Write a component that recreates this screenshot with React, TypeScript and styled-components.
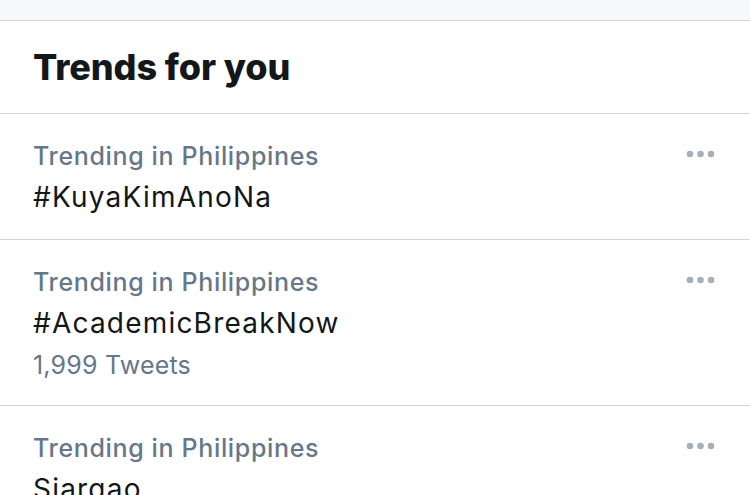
import styled, {createGlobalStyle} from "styled-components";

const GlobalStyle = createGlobalStyle`
  body {
    margin: 0;
    background: #ffffff;
    font-family: Inter, "Noto Sans", sans-serif;
    -webkit-font-smoothing: antialiased;
  }
`;

interface Trend {
    id: string;
    place: string;
    name: string;
    tweets?: string;
}

const trends: Array<Trend> = [
    {id: "1", place: "Trending in Philippines", name: "#KuyaKimAnoNa"},
    {id: "2", place: "Trending in Philippines", name: "#AcademicBreakNow", tweets: "1,999 Tweets"},
    {id: "3", place: "Trending in Philippines", name: "Siargao"},
];

export default function App() {
    return (
        <>
            <GlobalStyle/>
            <Page>
                <TopBand/>
                <Header>
                    <h2>Trends for you</h2>
                </Header>
                {trends.map(trend => (
                    <TrendRow key={trend.id}>
                        <TrendText>
                            <Place>{trend.place}</Place>
                            <Name>{trend.name}</Name>
                            {trend.tweets && <Count>{trend.tweets}</Count>}
                        </TrendText>
                        <MoreButton type="button" aria-label="More">
                            <svg width="29" height="8" viewBox="0 0 29 8">
                                <circle cx="4" cy="4" r="3.3" fill="#a7afb7"/>
                                <circle cx="14.5" cy="4" r="3.3" fill="#a7afb7"/>
                                <circle cx="25" cy="4" r="3.3" fill="#a7afb7"/>
                            </svg>
                        </MoreButton>
                    </TrendRow>
                ))}
            </Page>
        </>
    )
}

const Page = styled.div`
  width: 750px;
  height: 495px;
  overflow: hidden;
  background: #ffffff;
`;

const TopBand = styled.div`
  height: 20px;
  background: #f7f8fa;
  border-bottom: 1px solid #d3d3d8;
`;

const Header = styled.div`
  height: 92px;
  display: flex;
  align-items: center;
  padding: 0 33px;
  border-bottom: 1px solid #d3d3d8;

  h2 {
    margin: 0;
    font-size: 36px;
    font-weight: 800;
    letter-spacing: -0.1px;
    color: #14171a;
  }
`;

const TrendRow = styled.div`
  display: flex;
  justify-content: space-between;
  align-items: flex-start;
  padding: 23px 35px 20px 33px;
  border-bottom: 1px solid #d3d3d8;
`;

const TrendText = styled.div`
  display: flex;
  flex-direction: column;
`;

const Place = styled.span`
  font-size: 25px;
  line-height: 38px;
  font-weight: 500;
  letter-spacing: 0.65px;
  color: #66778a;
`;

const Name = styled.span`
  font-size: 28px;
  line-height: 44px;
  letter-spacing: 1.2px;
  color: #14171a;
`;

const Count = styled.span`
  font-size: 25px;
  line-height: 40px;
  letter-spacing: 0.2px;
  color: #66778a;
`;

const MoreButton = styled.button`
  border: none;
  background: transparent;
  padding: 0;
  margin-top: 13px;
  display: flex;
`;
